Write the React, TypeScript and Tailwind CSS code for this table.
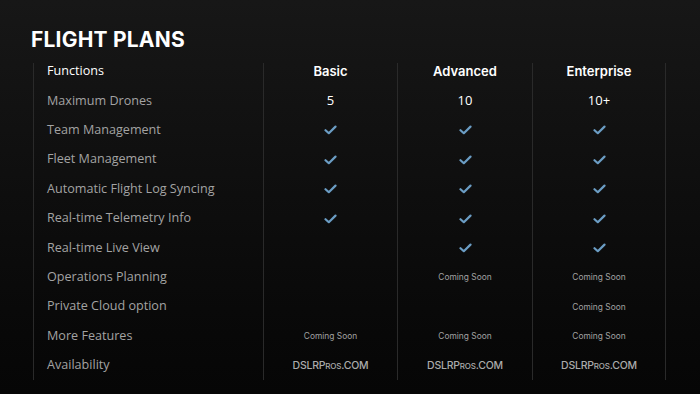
const PLANS = ['Basic', 'Advanced', 'Enterprise']

type Cell = 'check' | 'soon' | 'brand' | string | null

const ROWS: { label: string; cells: Cell[] }[] = [
  { label: 'Maximum Drones', cells: ['5', '10', '10+'] },
  { label: 'Team Management', cells: ['check', 'check', 'check'] },
  { label: 'Fleet Management', cells: ['check', 'check', 'check'] },
  { label: 'Automatic Flight Log Syncing', cells: ['check', 'check', 'check'] },
  { label: 'Real-time Telemetry Info', cells: ['check', 'check', 'check'] },
  { label: 'Real-time Live View', cells: [null, 'check', 'check'] },
  { label: 'Operations Planning', cells: [null, 'soon', 'soon'] },
  { label: 'Private Cloud option', cells: [null, null, 'soon'] },
  { label: 'More Features', cells: ['soon', 'soon', 'soon'] },
  { label: 'Availability', cells: ['brand', 'brand', 'brand'] },
]

function Check() {
  return (
    <svg width="13" height="10" viewBox="0 0 13 10" fill="none">
      <path d="M1.5 5.2 L4.8 8.2 L11.5 1.6" stroke="#6b9dc4" strokeWidth="2.2" strokeLinecap="round" strokeLinejoin="round" />
    </svg>
  )
}

function Brand() {
  return (
    <span className="font-['Inter',sans-serif] font-medium text-[10.5px] text-[#ababab] tracking-[-0.2px]">
      DSLRP<span className="text-[8px]">ROS</span>.COM
    </span>
  )
}

function CellView({ cell }: { cell: Cell }) {
  if (cell === null) return null
  if (cell === 'check') return <Check />
  if (cell === 'soon')
    return <span className="font-['Inter',sans-serif] text-[8.4px] text-[#a2a2a2]">Coming Soon</span>
  if (cell === 'brand') return <Brand />
  return <span className="font-['Open_Sans',sans-serif] text-[13px] text-white">{cell}</span>
}

export default function App() {
  return (
    <div className="w-[700px] h-[394px] bg-gradient-to-b from-[#171717] to-[#060606] overflow-hidden">
      <h1 className="pl-[31px] pt-[28px] h-[63px] font-['Inter',sans-serif] font-bold text-[21px] leading-[24px] text-white tracking-[0.2px]">
        FLIGHT PLANS
      </h1>
      <div className="ml-[33px] w-[633px] h-[309px] grid grid-cols-[230px_134px_135px_134px]">
        {[0, 1, 2, 3].map((c) => (
          <div key={c} className={`border-l border-[#2a2a2a] ${c === 3 ? 'border-r' : ''}`}>
            <div className="-mt-[6px]">
              {c === 0 ? (
                <>
                  <div className="h-[29.4px] flex items-center pl-[13px] font-['Open_Sans',sans-serif] text-[12.6px] text-white">
                    Functions
                  </div>
                  {ROWS.map((r) => (
                    <div key={r.label} className="h-[29.4px] flex items-center pl-[13px] font-['Open_Sans',sans-serif] text-[12.6px] text-[#a3a3a3]">
                      {r.label}
                    </div>
                  ))}
                </>
              ) : (
                <>
                  <div className="h-[29.4px] flex items-center justify-center font-['Inter',sans-serif] font-semibold text-[13px] text-white">
                    {PLANS[c - 1]}
                  </div>
                  {ROWS.map((r) => (
                    <div key={r.label} className="h-[29.4px] flex items-center justify-center">
                      <CellView cell={r.cells[c - 1]} />
                    </div>
                  ))}
                </>
              )}
            </div>
          </div>
        ))}
      </div>
    </div>
  )
}
